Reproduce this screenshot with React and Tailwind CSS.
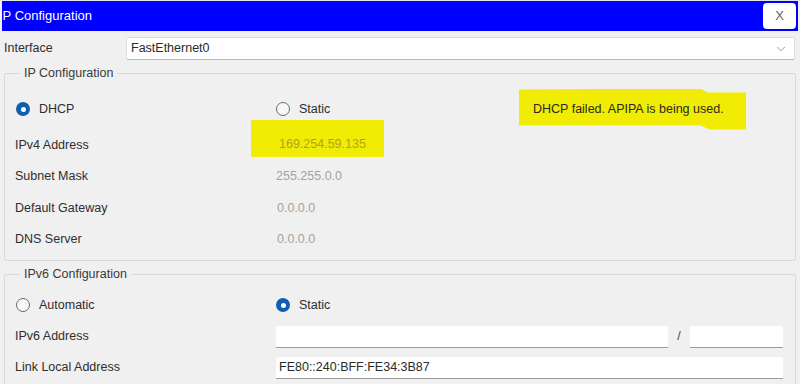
import { ChevronDown } from 'lucide-react';

function Radio({ checked }) {
  return checked ? (
    <span className="inline-flex h-[14px] w-[14px] items-center justify-center rounded-full bg-[#0f5fae]">
      <span className="h-[5px] w-[5px] rounded-full bg-white" />
    </span>
  ) : (
    <span className="inline-block h-[14px] w-[14px] rounded-full border-[1.5px] border-[#6b6b6b] bg-[#f7f7f7]" />
  );
}

function Row({ label, children, className = 'h-[31px]' }) {
  return (
    <div className={`flex items-center ${className}`}>
      <div className="w-[261px] shrink-0 text-[#2e2e2e]">{label}</div>
      <div className="flex flex-1 items-center">{children}</div>
    </div>
  );
}

function Field({ className, children }) {
  return (
    <div className={`flex h-[22px] items-center rounded-t-[3px] border-b border-[#9c9c9c] bg-white px-[3px] text-[#2b2b2b] ${className}`}>
      {children}
    </div>
  );
}

export default function App() {
  return (
    <div className="h-[384px] w-[800px] overflow-hidden border-t border-[#e6e6e6] bg-[#f0f0f0] font-['Liberation_Sans',Arial,sans-serif] text-[12.5px]">
      <div className="mx-[2px] flex h-[30px] items-center justify-between bg-[#0000fe]">
        <span className="-ml-[3px] text-[13px] text-white">IP Configuration</span>
        <button
          type="button"
          className="mr-[2px] flex h-[26px] w-[33px] items-center justify-center rounded-[4px] bg-white text-[13px] text-[#666]"
        >
          X
        </button>
      </div>

      <div className="mt-[6px] flex h-[23px] items-center">
        <span className="w-[126px] pl-[4px] text-[#2e2e2e]">Interface</span>
        <div className="mr-[5px] flex h-[23px] flex-1 items-center justify-between rounded-[2px] border border-[#dcdcdc] border-b-[#b8b8b8] bg-white pl-[4px] pr-[6px] text-[#2b2b2b]">
          <span>FastEthernet0</span>
          <ChevronDown size={14} strokeWidth={1.5} className="text-[#8a8a8a]" />
        </div>
      </div>

      <fieldset className="mx-[4px] mt-[6px] rounded-[2px] border border-[#d9d9d9] pb-[5px] pl-[10px] pr-0">
        <legend className="ml-[5px] px-[4px] leading-[14px] text-[#3a3a3a]">IP Configuration</legend>
        <div className="mt-[13px]">
          <Row
            className="h-[32px]"
            label={
              <span className="flex items-center gap-[9px] pl-px">
                <Radio checked />
                <span>DHCP</span>
              </span>
            }
          >
            <span className="flex w-[243px] items-center gap-[9px] text-[#2e2e2e]">
              <Radio />
              <span>Static</span>
            </span>
            <div className="-my-[4px] flex h-[41px] w-[227px] items-center bg-[#f1ec04] pl-[14px] text-[#2a2a1a] [clip-path:polygon(0_1px,70%_0,80%_0,83%_4px,100%_4px,100%_100%,84%_100%,80%_90%,0_90%)]">
              DHCP failed. APIPA is being used.
            </div>
          </Row>
          <Row className="mt-[4px] h-[32px]" label="IPv4 Address">
            <span className="relative -ml-[25px] flex h-[37px] w-[133px] -translate-y-[7px] items-end bg-[#f1ec04] pb-[3px] pl-[28px] text-[#b0a41c]">
              169.254.59.135
            </span>
          </Row>
          <Row label="Subnet Mask">
            <span className="text-[#a3a3a3]">255.255.0.0</span>
          </Row>
          <Row className="h-[32px]" label="Default Gateway">
            <span className="pl-px text-[#a3a3a3]">0.0.0.0</span>
          </Row>
          <Row label="DNS Server">
            <span className="pl-px text-[#a3a3a3]">0.0.0.0</span>
          </Row>
        </div>
      </fieldset>

      <fieldset className="mx-[4px] mt-[6px] rounded-[2px] border border-[#d9d9d9] pb-[8px] pl-[10px] pr-0">
        <legend className="ml-[5px] px-[4px] leading-[14px] text-[#3a3a3a]">IPv6 Configuration</legend>
        <div className="mt-[8px]">
          <Row
            className="h-[32px]"
            label={
              <span className="flex items-center gap-[9px] pl-px">
                <Radio />
                <span>Automatic</span>
              </span>
            }
          >
            <span className="flex items-center gap-[9px] text-[#2e2e2e]">
              <Radio checked />
              <span>Static</span>
            </span>
          </Row>
          <Row label="IPv6 Address">
            <Field className="w-[392px]" />
            <span className="w-[22px] text-center text-[#444]">/</span>
            <Field className="w-[93px]" />
          </Row>
          <Row label="Link Local Address">
            <Field className="w-[507px]">FE80::240:BFF:FE34:3B87</Field>
          </Row>
        </div>
      </fieldset>
    </div>
  );
}
